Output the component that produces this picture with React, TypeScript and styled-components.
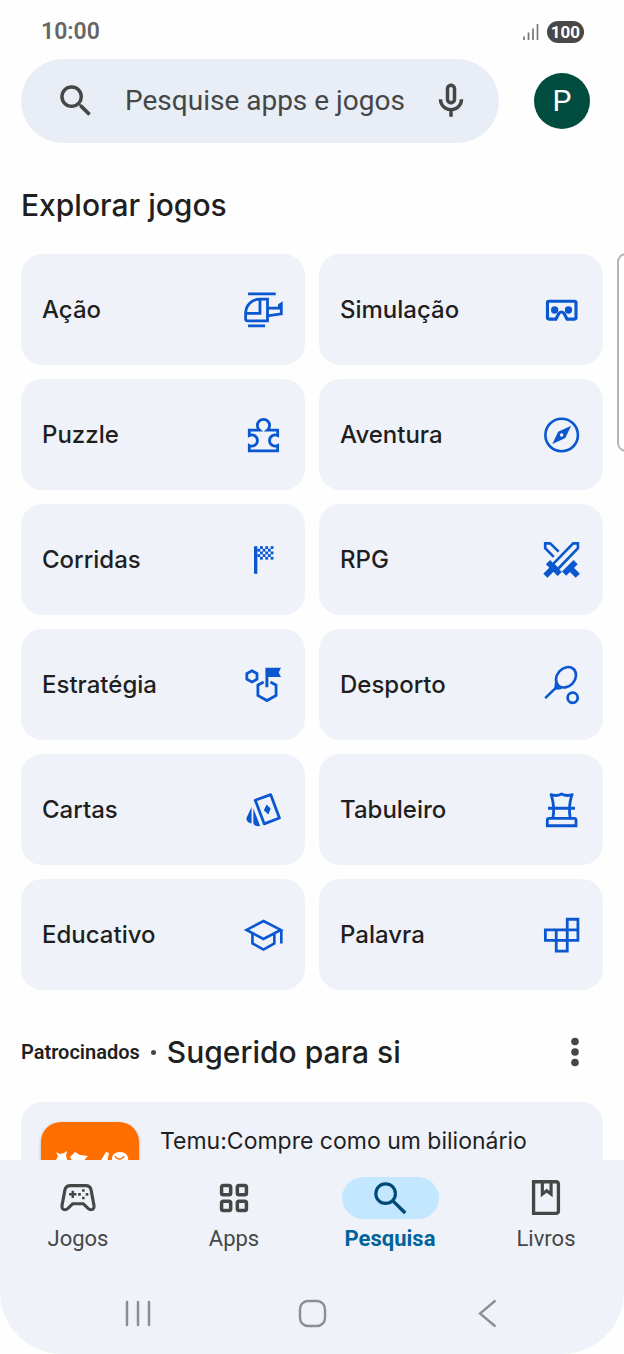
import React from "react";
import styled, { createGlobalStyle } from "styled-components";

const GlobalStyle = createGlobalStyle`
  *, *::before, *::after { box-sizing: border-box; }
  body {
    margin: 0;
    background: #fefefe;
    color: #1f1f1f;
    font-family: Roboto, "Liberation Sans", sans-serif;
  }
  button { border: 0; padding: 0; background: none; font: inherit; color: inherit; cursor: pointer; }
  h1, h2, p, ul { margin: 0; padding: 0; }
  ul { list-style: none; }
`;

const displayFont = `Inter, Roboto, "Liberation Sans", sans-serif`;

const Screen = styled.div`
  position: relative;
  display: flex;
  flex-direction: column;
  height: 100vh;
  overflow: hidden;
`;

const StatusBar = styled.header`
  flex: none;
  display: flex;
  align-items: center;
  justify-content: space-between;
  height: 59px;
  padding: 5px 40px 0 41px;
`;

const Clock = styled.time`
  font-size: 23px;
  font-weight: 600;
  line-height: 28px;
  color: #666;
`;

const StatusIcons = styled.div`
  display: flex;
  align-items: center;
  gap: 7px;
`;

const Battery = styled.span`
  width: 37px;
  height: 22px;
  border-radius: 11px;
  background: #484848;
  color: #fff;
  font-size: 17px;
  font-weight: 700;
  line-height: 22px;
  text-align: center;
`;

const SearchRow = styled.div`
  flex: none;
  display: flex;
  align-items: center;
  gap: 35px;
  padding: 0 34px 0 21px;
`;

const SearchBox = styled.form`
  flex: 1;
  min-width: 0;
  display: flex;
  align-items: center;
  height: 84px;
  padding: 0 27px 0 34px;
  border-radius: 42px;
  background: #e8edf6;
  color: #444746;
`;

const SearchInput = styled.input`
  flex: 1;
  min-width: 0;
  margin-left: 28px;
  padding: 0;
  border: 0;
  outline: 0;
  background: none;
  font: 400 28px/36px Roboto, "Liberation Sans", sans-serif;
  color: #444746;
  &::placeholder { color: #444746; opacity: 1; }
`;

const IconButton = styled.button`
  display: flex;
  flex: none;
`;

const Avatar = styled.button`
  flex: none;
  width: 56px;
  height: 56px;
  border-radius: 50%;
  background: #004d40;
  color: #fff;
  font-size: 30px;
  line-height: 56px;
`;

const Content = styled.main`
  flex: 1;
  min-height: 0;
  overflow: hidden;
  padding: 42px 21px 0;
`;

const Title = styled.h2`
  font-family: ${displayFont};
  font-size: 30px;
  font-weight: 450;
  line-height: 40px;
`;

const Tiles = styled.ul`
  display: grid;
  grid-template-columns: 1fr 1fr;
  gap: 14px;
  margin-top: 29px;
`;

const Tile = styled.button`
  display: flex;
  align-items: center;
  justify-content: space-between;
  width: 100%;
  height: 111px;
  padding: 0 20px 0 21px;
  border-radius: 21px;
  background: #eff3f9;
  font-family: ${displayFont};
  font-size: 24px;
  font-weight: 450;
  line-height: 32px;
`;

const Glyph = styled.svg`
  display: block;
  flex: none;
  width: 42px;
  height: 42px;
`;

const TileGlyph = styled(Glyph)`
  fill: none;
  stroke: #0b57d0;
  stroke-width: 1.6;
  .solid { fill: #0b57d0; stroke: none; }
`;

const SponsoredHead = styled.div`
  display: flex;
  align-items: center;
  margin-top: 41px;
`;

const Sponsored = styled.span`
  font-size: 20px;
  font-weight: 600;
  line-height: 24px;
`;

const Dot = styled.span`
  width: 5px;
  height: 5px;
  margin: 0 11px;
  border-radius: 50%;
  background: #444746;
`;

const MoreButton = styled(IconButton)`
  margin-left: auto;
  margin-right: 7px;
`;

const AdCard = styled.article`
  display: flex;
  gap: 21px;
  height: 140px;
  margin-top: 29px;
  padding: 20px;
  border-radius: 21px;
  background: #eff3f9;
`;

const AdLogo = styled.svg`
  flex: none;
  width: 98px;
  height: 98px;
  border-radius: 20px;
  background: #ff6f00;
  box-shadow: 0 1px 3px rgba(0, 0, 0, 0.3);
`;

const AdName = styled.p`
  margin-top: 3px;
  font-family: ${displayFont};
  font-size: 23px;
  line-height: 32px;
`;

const Footer = styled.footer`
  flex: none;
  border-radius: 0 0 62px 62px;
  background: #eff3f9;
`;

const TabBar = styled.nav`
  display: grid;
  grid-template-columns: repeat(4, 1fr);
  padding-top: 17px;
`;

const Tab = styled.button<{ $active?: boolean }>`
  display: flex;
  flex-direction: column;
  align-items: center;
  gap: 6px;
  font-size: 22px;
  font-weight: ${(p) => (p.$active ? 700 : 450)};
  line-height: 28px;
  color: ${(p) => (p.$active ? "#00639b" : "#444746")};
`;

const Pill = styled.span<{ $active?: boolean }>`
  display: flex;
  justify-content: center;
  width: 97px;
  height: 42px;
  border-radius: 21px;
  color: ${(p) => (p.$active ? "#004a77" : "#444746")};
  background: ${(p) => (p.$active ? "#c2e7ff" : "transparent")};
`;

const SystemBar = styled.div`
  display: flex;
  justify-content: space-between;
  height: 101px;
  padding: 40px 114px 0 115px;
  color: #8b8d91;
`;

const EdgeHandle = styled.div`
  position: absolute;
  top: 253px;
  right: -13px;
  width: 20px;
  height: 199px;
  border: 2px solid #b4b4b4;
  border-radius: 9px;
  background: #fff;
`;

const checks = Array.from({ length: 30 }, (_, i) => ({ c: i % 6, r: Math.floor(i / 6) })).filter(
  ({ c, r }) => (c + r) % 2 === 1
);

const categories: { name: string; art: React.ReactNode }[] = [
  {
    name: "Ação",
    art: (
      <>
        <path d="M2.9 2.8h15.8M2.9 21.1h9.7" />
        <path d="M14 5.8H9.6C5 5.8 1.5 9.4 1.5 14v3.2a1 1 0 0 0 1 1H14zM9.7 5.8v8.1H1.5" />
        <path d="M14 10.9h6.6l.2-1.7 1.1-.7v5.7L14 15.3" />
      </>
    ),
  },
  {
    name: "Simulação",
    art: (
      <>
        <path
          strokeWidth="1.8"
          d="M4.4 7h14.9a.7.7 0 0 1 .7.7v8.8a.7.7 0 0 1-.7.7h-4.4l-1.6-3.1c-.7-1.3-2.5-1.3-3.2 0l-1.6 3.1H4.4a.7.7 0 0 1-.7-.7V7.7a.7.7 0 0 1 .7-.7z"
        />
        <circle className="solid" cx="7.8" cy="12" r="2.1" />
        <circle className="solid" cx="15.7" cy="12" r="2.1" />
      </>
    ),
  },
  {
    name: "Puzzle",
    art: (
      <path d="M3.6 12.3V9.2h5.8a3.5 3.5 0 1 1 4.6 0h5.8v3.1A3.2 3.2 0 1 0 19.8 18v3.1H3.6V18A3.2 3.2 0 1 0 3.6 12.3z" />
    ),
  },
  {
    name: "Aventura",
    art: (
      <>
        <circle cx="11.8" cy="12" r="9.3" strokeWidth="1.5" />
        <path
          className="solid"
          fillRule="evenodd"
          d="M17.2 6.7l-3.3 7L6.5 17.2l3.3-7zM11.8 11a1 1 0 1 0 0 2 1 1 0 0 0 0-2z"
        />
      </>
    ),
  },
  {
    name: "Corridas",
    art: (
      <>
        <path className="solid" d="M6.3 4.1h1.9v15.8H6.3z" />
        {checks.map(({ c, r }) => (
          <rect
            key={`${c}-${r}`}
            className="solid"
            x={8.2 + c * 1.52}
            y={4.1 + r * 1.52}
            width="1.6"
            height="1.6"
          />
        ))}
      </>
    ),
  },
  {
    name: "RPG",
    art: (
      <>
        <path strokeWidth="1.5" d="M7 14.2L18.4 2.5h2.7v2.8L9.8 17M10.1 7.2L5.2 2.5H2.4v2.7l4.9 5" />
        <path strokeWidth="3.4" d="M4 13.2l6.7 6.8M2.5 21l6-6M19.8 13.2l-6.600 6.600M21 21l-5.300-5.300" />
      </>
    ),
  },
  {
    name: "Estratégia",
    art: (
      <>
        <path d="M5.1 3.9L8 5.5v3.2l-2.900 1.600-2.900-1.600V5.500z" />
        <path d="M11.8 10.3l-3.300 1.800V18l5.200 2.900 5.200-2.900v-5.900l-3.200-1.800" />
        <path className="solid" d="M12.8 2.2h8.900l-1.300 2.600 1.300 2.600h-7.200v5.900h-1.700z" />
      </>
    ),
  },
  {
    name: "Desporto",
    art: (
      <>
        <ellipse cx="14.3" cy="7.6" rx="6.4" ry="5.1" transform="rotate(-48 14.3 7.6)" strokeWidth="1.5" />
        <path className="solid" d="M8 10.2c.7 2.2 2 3.5 4.400 4-1.700.5-2.800.3-3.400.7l-1.400-1.200c.3-1.200 0-2 .4-3.500z" />
        <path d="M2.4 19.5l6.200-6" strokeWidth="1.5" />
        <circle cx="18.1" cy="19.3" r="2.9" strokeWidth="1.6" />
      </>
    ),
  },
  {
    name: "Cartas",
    art: (
      <>
        <path strokeLinejoin="round" d="M7 6.4l8.800-3.200 5 13.400-8.700 3.300z" />
        <path className="solid" d="M13.5 8.9l2.300 2.300-1.300 3.300-2.600-2.300z" />
        <path className="solid" d="M4.9 10.3v9.400c-2.300-.4-3.300-1.500-2.800-3.400zM5.900 11l3.900 10.200c-2.600.3-3.900-.5-3.900-2.200z" />
      </>
    ),
  },
  {
    name: "Tabuleiro",
    art: (
      <>
        <path
          strokeWidth="1.6"
          d="M5.1 3c2.800 1.200 4.700.9 6.700-.1 2 1 3.900 1.300 6.700.1M5.900 3.500c1.300 4.200 2 7.500.9 13M17.600 3.500c-1.300 4.200-2 7.500-.9 13M4 11h15.400"
        />
        <path strokeWidth="1.6" d="M3.6 21v-3.200a1 1 0 0 1 1-1h14.400a1 1 0 0 1 1 1V21z" />
      </>
    ),
  },
  {
    name: "Educativo",
    art: (
      <path
        strokeWidth="1.5"
        d="M11.7 4l9.900 5.100-9.900 5.200-9.700-5.200zM21.900 9.100v7.700M5.400 11.200v5.600l6.300 3.500 6.200-3.500v-5.600"
      />
    ),
  },
  {
    name: "Palavra",
    art: <path strokeWidth="1.6" d="M15 9.1V3h6.100v12.100H2.500v-6h18.600M8.700 9.100v12.100H15V9.100" />,
  },
];

const SearchGlyph = () => (
  <Glyph viewBox="0 0 24 24" fill="currentColor" aria-hidden="true">
    <path d="M15.5 14h-.79l-.28-.27A6.47 6.47 0 0 0 16 9.5 6.5 6.5 0 1 0 9.5 16c1.61 0 3.09-.59 4.23-1.57l.27.28v.79l5 4.99L20.49 19l-4.99-5zm-6 0C7.01 14 5 11.99 5 9.5S7.01 5 9.5 5 14 7.01 14 9.5 11.99 14 9.5 14z" />
  </Glyph>
);

const tabs: { name: string; active?: boolean; art: React.ReactNode }[] = [
  {
    name: "Jogos",
    art: (
      <>
        <path
          strokeWidth="1.8"
          strokeLinejoin="round"
          d="M7.7 4.9h8.6c1.7 0 2.9 1 3.2 2.6l1.6 8.6c.4 1.7-.5 2.6-1.7 2.6-.7 0-1.2-.3-1.6-.7l-2.7-2.700H8.900l-2.700 2.700c-.4.4-.9.7-1.600.7-1.200 0-2.100-.9-1.700-2.600l1.600-8.600c.3-1.600 1.500-2.600 3.200-2.600z"
        />
        <path strokeWidth="1.4" d="M6.9 9.9h4.200M9 7.8V12" />
        <path strokeWidth="1.5" d="M14.3 7.7h1.500M14.3 12h1.500M12.1 9.9h1.500M16.4 9.9h1.500" />
      </>
    ),
  },
  {
    name: "Apps",
    art: (
      <g strokeWidth="2">
        <rect x="4.9" y="4.9" width="5.2" height="5.2" rx="1" />
        <rect x="13.9" y="4.9" width="5.2" height="5.2" rx="1" />
        <rect x="4.9" y="13.9" width="5.2" height="5.2" rx="1" />
        <rect x="13.9" y="13.9" width="5.2" height="5.2" rx="1" />
      </g>
    ),
  },
  {
    name: "Pesquisa",
    active: true,
    art: (
      <>
        <circle cx="9.5" cy="9.5" r="5.6" strokeWidth="1.8" />
        <path strokeWidth="2" d="M13.5 13.5l7.200 7.100" />
      </>
    ),
  },
  {
    name: "Livros",
    art: (
      <>
        <path strokeWidth="1.9" d="M4.9 2.7h12.700c.9 0 1.500.6 1.500 1.500v15.100c0 .9-.6 1.500-1.500 1.500H4.900z" />
        <path strokeWidth="1.8" d="M9.9 2.7v7.100l2.500-1.900 2.500 1.900V2.700" />
      </>
    ),
  },
];

export default function App() {
  return (
    <>
      <GlobalStyle />
      <Screen>
        <StatusBar>
          <Clock>10:00</Clock>
          <StatusIcons>
            <svg width="18" height="18" viewBox="0 0 18 18" stroke="#777" strokeWidth="1.7" aria-hidden="true">
              <path d="M2 13.5V17M6.5 9.5V17M11 5.5V17M15.5 1V17" />
            </svg>
            <Battery>100</Battery>
          </StatusIcons>
        </StatusBar>

        <SearchRow>
          <SearchBox role="search">
            <SearchGlyph />
            <SearchInput type="text" aria-label="Pesquisar" placeholder="Pesquise apps e jogos" />
            <IconButton type="button" aria-label="Pesquisa por voz">
              <Glyph viewBox="0 0 24 24" fill="currentColor" aria-hidden="true">
                <path d="M12 14c1.66 0 3-1.34 3-3V5c0-1.66-1.34-3-3-3S9 3.34 9 5v6c0 1.66 1.34 3 3 3zm-1-9c0-.55.45-1 1-1s1 .45 1 1v6c0 .55-.45 1-1 1s-1-.45-1-1V5zm6 6c0 2.76-2.24 5-5 5s-5-2.24-5-5H5c0 3.53 2.61 6.43 6 6.92V21h2v-3.08c3.39-.49 6-3.39 6-6.92h-2z" />
              </Glyph>
            </IconButton>
          </SearchBox>
          <Avatar type="button" aria-label="Conta">P</Avatar>
        </SearchRow>

        <Content>
          <Title>Explorar jogos</Title>
          <Tiles>
            {categories.map(({ name, art }) => (
              <li key={name}>
                <Tile type="button">
                  {name}
                  <TileGlyph viewBox="0 0 24 24" aria-hidden="true">{art}</TileGlyph>
                </Tile>
              </li>
            ))}
          </Tiles>

          <SponsoredHead>
            <Sponsored>Patrocinados</Sponsored>
            <Dot />
            <Title>Sugerido para si</Title>
            <MoreButton type="button" aria-label="Mais opções">
              <Glyph viewBox="0 0 42 42" fill="#444746" aria-hidden="true">
                <circle cx="21" cy="10.5" r="3.8" />
                <circle cx="21" cy="21" r="3.8" />
                <circle cx="21" cy="31.5" r="3.8" />
              </Glyph>
            </MoreButton>
          </SponsoredHead>

          <AdCard>
            <AdLogo viewBox="0 0 98 98" fill="#fff" aria-hidden="true">
              <path d="M15 30l4 2 4-1 3-2-1 5 2 6H14l3-6z" />
              <path d="M29 35l5-5 5 3 8 1-3 3-1 3H32z" />
              <path d="M65 30l3 1-2 9h-7z" />
              <path d="M71 40c-1-6 2-10 8-10s9 4 8 10z" />
              <path d="M74 34c2 4 7 4 9 0" fill="none" stroke="#ff6f00" strokeWidth="1.5" />
            </AdLogo>
            <AdName>Temu:Compre como um bilionário</AdName>
          </AdCard>
        </Content>

        <Footer>
          <TabBar>
            {tabs.map(({ name, active, art }) => (
              <Tab key={name} type="button" $active={active} aria-current={active ? "page" : undefined}>
                <Pill $active={active}>
                  <Glyph viewBox="0 0 24 24" fill="none" stroke="currentColor" aria-hidden="true">{art}</Glyph>
                </Pill>
                {name}
              </Tab>
            ))}
          </TabBar>
          <SystemBar>
            <IconButton type="button" aria-label="Recentes">
              <svg width="46" height="42" viewBox="0 0 46 42" stroke="currentColor" strokeWidth="2.5" strokeLinecap="round">
                <path d="M12 9v23M23 9v23M34 9v23" />
              </svg>
            </IconButton>
            <IconButton type="button" aria-label="Início">
              <svg width="46" height="42" viewBox="0 0 46 42" fill="none" stroke="currentColor" strokeWidth="2.4">
                <rect x="10" y="8" width="25" height="25" rx="8" />
              </svg>
            </IconButton>
            <IconButton type="button" aria-label="Voltar">
              <svg width="46" height="42" viewBox="0 0 46 42" fill="none" stroke="currentColor" strokeWidth="2.3">
                <path d="M31.5 7.5L16 20.500l15.500 13" />
              </svg>
            </IconButton>
          </SystemBar>
        </Footer>
        <EdgeHandle />
      </Screen>
    </>
  );
}
